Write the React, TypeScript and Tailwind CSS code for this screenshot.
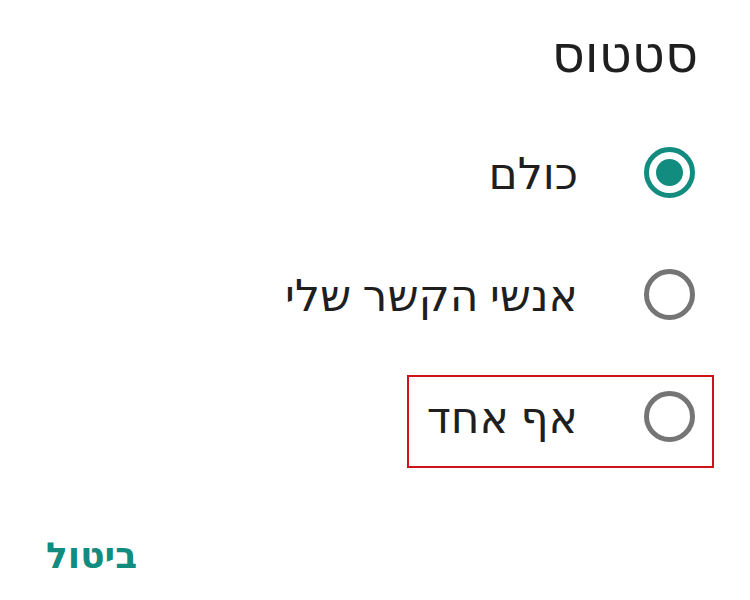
const options = [
  { id: 'all', label: 'כולם', checked: true },
  { id: 'contacts', label: 'אנשי הקשר שלי', checked: false },
  { id: 'nobody', label: 'אף אחד', checked: false, marked: true },
]

function Radio({ checked }: { checked: boolean }) {
  return (
    <span
      className={
        checked
          ? 'flex size-[51px] shrink-0 items-center justify-center rounded-full border-[5px] border-[#128c7e]'
          : 'flex size-[51px] shrink-0 items-center justify-center rounded-full border-[5px] border-[#757575]'
      }
    >
      {checked && <span className="size-[27px] rounded-full bg-[#128c7e]" />}
    </span>
  )
}

export default function App() {
  return (
    <div
      dir="rtl"
      className="flex h-[600px] w-[750px] flex-col overflow-hidden bg-white text-[#1f1f1f]"
      style={{ fontFamily: '"Noto Sans", "DejaVu Sans", sans-serif' }}
    >
      <h2 className="pr-[52px] pt-[16px] text-[51px] leading-[72px]">סטטוס</h2>

      <ul className="mt-[23px] flex flex-col">
        {options.map((o) => (
          <li key={o.id} className="relative flex h-[122px] items-center gap-[66px] pr-[55px]">
            <Radio checked={o.checked} />
            <span className="text-[44px] leading-none">{o.label}</span>
            {o.marked && (
              <span
                aria-hidden
                className="pointer-events-none absolute right-[36px] top-[20px] h-[93px] w-[307px] border-[2.5px] border-[#d0121b]"
              />
            )}
          </li>
        ))}
      </ul>

      <div className="mt-auto pb-[18px] pl-[46px]" dir="ltr">
        <button dir="rtl" className="text-[36px] font-semibold text-[#128c7e]">
          ביטול
        </button>
      </div>
    </div>
  )
}
